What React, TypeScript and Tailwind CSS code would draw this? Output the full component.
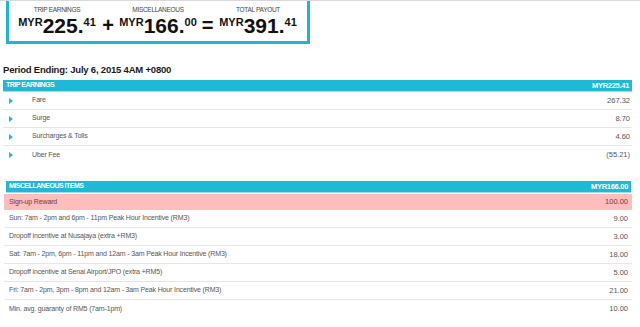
const CYAN = 'bg-[#1fb8d5]';

type Line = { label: string; value: string };

const tripLines: Line[] = [
  { label: 'Fare', value: '267.32' },
  { label: 'Surge', value: '8.70' },
  { label: 'Surcharges & Tolls', value: '4.60' },
  { label: 'Uber Fee', value: '(55.21)' },
];

const miscLines: Line[] = [
  { label: 'Sun: 7am - 2pm and 6pm - 11pm Peak Hour Incentive (RM3)', value: '9.00' },
  { label: 'Dropoff incentive at Nusajaya (extra +RM3)', value: '3.00' },
  { label: 'Sat: 7am - 2pm, 6pm - 11pm and 12am - 3am Peak Hour Incentive (RM3)', value: '18.00' },
  { label: 'Dropoff incentive at Senai Airport/JPO (extra +RM5)', value: '5.00' },
  { label: 'Fri: 7am - 2pm, 3pm - 8pm and 12am - 3am Peak Hour Incentive (RM3)', value: '21.00' },
  { label: 'Min. avg. guaranty of RM5 (7am-1pm)', value: '10.00' },
];

function Amount({ label, whole, cents, width }: { label: string; whole: string; cents: string; width: string }) {
  return (
    <div className={`${width} flex flex-col items-center`}>
      <div className="text-[6.5px] leading-[8px] tracking-[-0.3px] text-[#444] mt-[5px]">{label}</div>
      <div className="flex items-start font-bold text-[#111] mt-[1px]">
        <span className="text-[11px] leading-none mt-[2px]">MYR</span>
        <span className="text-[21px] leading-none">{whole}</span>
        <span className="text-[11px] leading-none mt-[2px]">{cents}</span>
      </div>
    </div>
  );
}

function SectionHeader({ title, total }: { title: string; total: string }) {
  return (
    <div className={`${CYAN} h-[12px] flex items-center justify-between px-[3px] border-b border-[#9fdfeb] text-white font-bold text-[7px] tracking-[-0.5px]`}>
      <span>{title}</span>
      <span className="text-[7.5px] tracking-[-0.3px]">{total}</span>
    </div>
  );
}

export default function App() {
  return (
    <div className="w-[640px] h-[327px] overflow-hidden bg-white font-['Liberation_Sans',Arial,sans-serif]">
      <div className="h-px bg-[#d9d9d9]" />

      {/* payout summary box */}
      <div className="ml-[6px] w-[304px] h-[43px] border-[3px] border-t-0 border-[#1cb6d5] flex pl-[5px]">
        <Amount label="TRIP EARNINGS" whole="225." cents="41" width="w-[86px]" />
        <div className="w-[16px] text-center font-bold text-[20px] leading-none text-[#111] pt-[14px]">+</div>
        <Amount label="MISCELLANEOUS" whole="166." cents="00" width="w-[84px]" />
        <div className="w-[15px] text-center font-bold text-[20px] leading-none text-[#111] pt-[14px]">=</div>
        <Amount label="TOTAL PAYOUT" whole="391." cents="41" width="w-[86px]" />
      </div>

      <div className="pt-[20px] pl-[3px] h-[36px] text-[9.5px] leading-[12px] font-bold text-[#1a1a1a] tracking-[-0.2px]">
        Period Ending: July 6, 2015 4AM +0800
      </div>

      {/* trip earnings */}
      <div className="ml-[3px] w-[629px]">
        <SectionHeader title="TRIP EARNINGS" total="MYR225.41" />
        {tripLines.map((l, i) => (
          <div
            key={l.label}
            className={`h-[18px] flex items-center text-[7.5px] text-[#555] pr-[2px] ${i < tripLines.length - 1 ? 'border-b border-[#e6e6e6]' : ''}`}
          >
            <span className="w-0 h-0 ml-[6px] border-y-[3px] border-y-transparent border-l-[4px] border-l-[#1fb8d5]" />
            <span className="ml-[19px] flex-1 text-[7px] tracking-[-0.15px]">{l.label}</span>
            <span>{l.value}</span>
          </div>
        ))}
      </div>

      {/* miscellaneous */}
      <div className="ml-[4px] w-[628px] mt-[17px]">
        <div className="ml-[2px] mr-[1px]">
          <SectionHeader title="MISCELLANEOUS ITEMS" total="MYR166.00" />
        </div>
        <div className="mt-[1px] h-[16px] bg-[#ffbdbd] flex items-center justify-between pl-[5px] pr-[4px] text-[7.5px] text-[#6e3b3b]">
          <span className="text-[7px] tracking-[-0.15px]">Sign-up Reward</span>
          <span>100.00</span>
        </div>
        {miscLines.map((l, i) => (
          <div
            key={l.label}
            className={`h-[18px] flex items-center justify-between pl-[5px] pr-[4px] text-[7.5px] text-[#555] ${i < miscLines.length - 1 ? 'border-b border-[#e6e6e6]' : ''}`}
          >
            <span className="text-[7px] tracking-[-0.15px]">{l.label}</span>
            <span>{l.value}</span>
          </div>
        ))}
      </div>
    </div>
  );
}
